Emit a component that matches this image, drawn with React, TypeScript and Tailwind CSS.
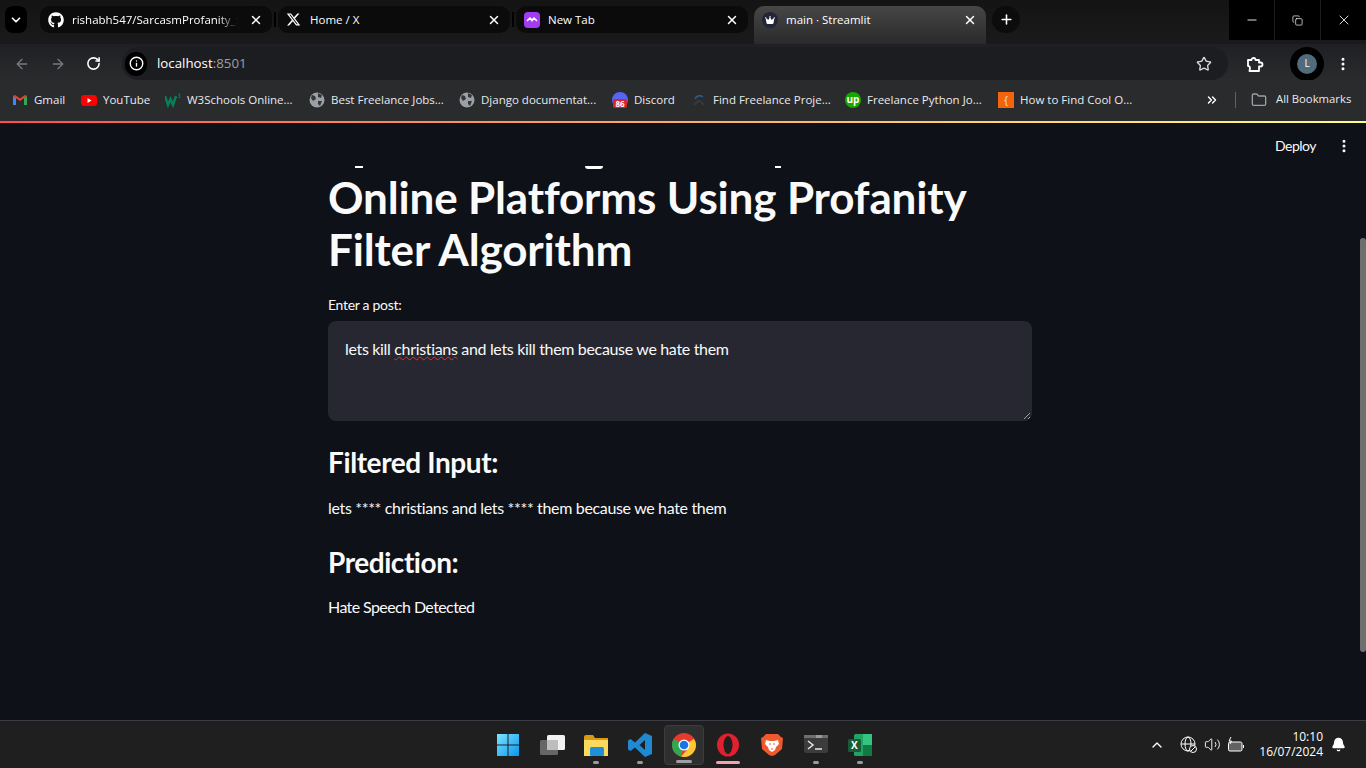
import { ReactNode } from 'react'
import { ChevronDown, X, Plus, Minus, ArrowLeft, ArrowRight, RotateCw, Info, Star, MoreVertical, ChevronUp, ChevronsRight, Folder, Volume2, Bell, Copy } from 'lucide-react'
import { FaGithub, FaXTwitter, FaCrown } from 'react-icons/fa6'

const ui = "font-['Open_Sans','Liberation_Sans',sans-serif]"
const st = "font-['Lato','Liberation_Sans',sans-serif]"

const Globe = () => (
  <svg width="16" height="16" viewBox="0 0 16 16">
    <circle cx="8" cy="8" r="7.5" fill="#9aa0a6" />
    <path d="M3 3l3 1 1 3-3 2-2-3zM9 1l4 2-1 3-3-1zM9 9l4 0-2 5-2-2z" fill="#35363a" />
  </svg>
)

const bookmarks: { icon: ReactNode; label: string; w: string }[] = [
  {
    label: 'Gmail',
    w: 'w-[31px]',
    icon: (
      <svg width="16" height="16" viewBox="0 0 16 16">
        <path d="M1 13V4l3 2v7z" fill="#4285f4" />
        <path d="M12 13V6l3-2v9z" fill="#34a853" />
        <path d="M1 4l7 5 7-5-2-1-5 3.5L3 3z" fill="#ea4335" />
      </svg>
    ),
  },
  {
    label: 'YouTube',
    w: 'w-[46px]',
    icon: (
      <svg width="16" height="16" viewBox="0 0 16 16">
        <rect x="0" y="3" width="16" height="11" rx="3" fill="#f00" />
        <path d="M6.5 6v5l4-2.5z" fill="#fff" />
      </svg>
    ),
  },
  {
    label: 'W3Schools Online...',
    w: 'w-[106px]',
    icon: (
      <svg width="16" height="16" viewBox="0 0 16 16">
        <path d="M0 4l3 9 2.5-6 2.5 6 3-9" fill="none" stroke="#04815a" strokeWidth="2.4" />
        <path d="M13 2h2l-1 1.5h1v2h-2" fill="none" stroke="#04815a" strokeWidth="0.8" />
      </svg>
    ),
  },
  { label: 'Best Freelance Jobs...', w: 'w-[112px]', icon: <Globe /> },
  { label: 'Django documentat...', w: 'w-[115px]', icon: <Globe /> },
  {
    label: 'Discord',
    w: 'w-[41px]',
    icon: (
      <span className="relative block h-4 w-4">
        <span className="absolute left-0 top-0 h-4 w-4 rounded-full bg-[#5865f2]" />
        <span className="absolute left-[1px] top-[7px] h-[9px] w-[14px] rounded-[2px] bg-[#d8232a] text-center text-[8px] font-bold leading-[9px] text-white">
          86
        </span>
      </span>
    ),
  },
  {
    label: 'Find Freelance Proje...',
    w: 'w-[116px]',
    icon: (
      <svg width="16" height="16" viewBox="0 0 16 16">
        <path d="M4 7a5 5 0 0 1 8-2" fill="none" stroke="#2b5d85" strokeWidth="1.6" />
        <path d="M3 13l4-4h2l4 4" fill="none" stroke="#36393d" strokeWidth="2.2" />
      </svg>
    ),
  },
  {
    label: 'Freelance Python Jo...',
    w: 'w-[115px]',
    icon: (
      <span className="block h-4 w-4 rounded-full bg-[#14a800] text-center text-[10px] font-bold leading-[15px] text-white">
        up
      </span>
    ),
  },
  {
    label: 'How to Find Cool O...',
    w: 'w-[113px]',
    icon: (
      <span className="block h-4 w-4 bg-[#f4640c] text-center text-[11px] leading-[15px] text-[#ffe3c8]">
        {'{'}
      </span>
    ),
  },
]

const Tab = ({ icon, label, active, fade, sep }: { icon: ReactNode; label: string; active?: boolean; fade?: boolean; sep?: boolean }) => (
  <div
    className={`relative flex w-[232px] items-center rounded-t-[10px] pl-[8px] pr-[9px] ${
      active
        ? 'h-[38px] bg-gradient-to-b from-[#474747] to-[#2a2a2a] pb-[11px]'
        : 'h-[27px] rounded-b-[10px] bg-[#0b0b0b]'
    }`}
  >
    <span className="flex w-[24px] shrink-0 items-center">{icon}</span>
    <span
      className={`w-[166px] overflow-hidden whitespace-nowrap text-[11.5px] text-white ${
        fade ? '[mask-image:linear-gradient(to_right,#000_88%,transparent)]' : ''
      }`}
    >
      {label}
    </span>
    <X size={14} strokeWidth={2.5} className="ml-auto text-white" />
    {sep && <span className="absolute -right-[4px] top-[6px] h-[15px] w-[2px] bg-black" />}
  </div>
)

const TaskIcon = ({ children, pip, active }: { children: ReactNode; pip?: string; active?: boolean }) => (
  <div className={`relative flex h-[40px] w-[40px] items-center justify-center rounded-[4px] ${active ? 'border border-[#3d3d3d] bg-[#2f2f2f]' : ''}`}>
    {children}
    {pip && <span className={`absolute bottom-[1px] left-1/2 h-[3px] -translate-x-1/2 rounded-full ${pip}`} />}
  </div>
)

export default function App() {
  return (
    <div className={`flex h-[768px] w-[1366px] flex-col overflow-hidden bg-[#0e1117] ${ui}`}>
      {/* tab strip */}
      <div className="flex h-[44px] items-start bg-gradient-to-b from-[#141414] to-[#1a1a1a] pl-[5px]">
        <div className="mt-[6px] flex h-[27px] w-[22px] items-center justify-center rounded-[8px] bg-black">
          <ChevronDown size={14} strokeWidth={3} className="text-white" />
        </div>
        <div className="ml-[13px] mt-[6px] flex w-[946px] items-start gap-[6px]">
          <Tab icon={<FaGithub size={16} className="text-white" />} label="rishabh547/SarcasmProfanity_Sf" fade sep />
          <Tab icon={<FaXTwitter size={15} className="text-white" />} label="Home / X" sep />
          <Tab
            icon={
              <svg width="16" height="16" viewBox="0 0 16 16">
                <rect width="16" height="16" rx="4" fill="#a23cf0" />
                <path d="M3 9l3-3 3 3M7 9l3-3 3 3" fill="none" stroke="#fff" strokeWidth="1.5" />
              </svg>
            }
            label="New Tab"
          />
          <Tab
            active
            icon={
              <span className="flex h-4 w-4 items-center justify-center rounded-full bg-[#23253a]">
                <FaCrown size={10} className="text-white" />
              </span>
            }
            label="main · Streamlit"
          />
        </div>
        <div className="ml-[6px] mt-[6px] flex h-[27px] w-[28px] items-center justify-center rounded-full bg-[#0c0c0c]">
          <Plus size={15} strokeWidth={2.5} className="text-white" />
        </div>
        <div className="ml-auto flex h-[40px] w-[137px] bg-black">
          <div className="flex w-[46px] items-center justify-center border-r border-[#1c1c1c]">
            <Minus size={14} strokeWidth={1.5} className="text-white" />
          </div>
          <div className="flex w-[46px] items-center justify-center border-r border-[#1c1c1c]">
            <Copy size={11} strokeWidth={1.5} className="text-white" />
          </div>
          <div className="flex w-[45px] items-center justify-center">
            <X size={16} strokeWidth={1.3} className="text-white" />
          </div>
        </div>
      </div>

      {/* toolbar */}
      <div className="flex h-[36px] items-center bg-gradient-to-b from-[#1f2023] to-[#2a2b2d] pt-[3px]">
        <ArrowLeft size={16} className="ml-[14px] text-[#77797c]" />
        <ArrowRight size={16} className="ml-[20px] text-[#77797c]" />
        <RotateCw size={15} strokeWidth={2.5} className="ml-[20px] text-white" />
        <div className="ml-[21px] flex h-[33px] w-[1106px] items-center rounded-full bg-[#1c1d20]">
          <span className="ml-[3px] flex h-[24px] w-[22px] items-center justify-center rounded-full bg-black">
            <Info size={15} strokeWidth={2.2} className="text-white" />
          </span>
          <span className="ml-[10px] text-[13.3px] text-white">
            localhost<span className="text-[#9aa0a6]">:8501</span>
          </span>
          <Star size={16} strokeWidth={2} className="ml-auto mr-[16px] text-[#dadce0]" />
        </div>
        <svg width="18" height="18" viewBox="0 0 18 18" fill="none" stroke="#fff" strokeWidth="1.8" className="ml-[18px]">
          <path d="M2 5h3.5a2 2 0 0 1 4 0H13v2.5h1.5a2 2 0 0 1 0 4H13V16H3.5l.5-3a1.8 1.8 0 0 0-2-2z" strokeLinejoin="round" />
        </svg>
        <span className="ml-[26px] flex h-[34px] w-[34px] items-center justify-center rounded-full bg-black">
          <span className="flex h-5 w-5 items-center justify-center rounded-full bg-[#4f6b7c] text-[10px] text-white">L</span>
        </span>
        <MoreVertical size={16} strokeWidth={2.5} className="ml-[11px] text-white" />
      </div>

      {/* bookmarks */}
      <div className="flex h-[41px] items-center gap-[16px] bg-[#2a2b2d] pb-[2px] pl-[12px]">
        {bookmarks.map((b) => (
          <div key={b.label} className="flex items-center gap-[6px]">
            <span className="shrink-0">{b.icon}</span>
            <span className={`whitespace-nowrap text-[11.5px] text-[#e8eaed] ${b.w}`}>{b.label}</span>
          </div>
        ))}
        <ChevronsRight size={14} strokeWidth={2.5} className="ml-[56px] text-white" />
        <span className="h-[16px] w-px bg-[#5f6368]" />
        <div className="-ml-[1px] flex items-center gap-[9px]">
          <Folder size={16} className="text-[#9aa0a6]" />
          <span className="whitespace-nowrap text-[11.3px] text-[#e8eaed]">All Bookmarks</span>
        </div>
      </div>

      {/* streamlit top decoration */}
      <div className="h-[2px] bg-gradient-to-r from-[#ff4b4b] to-[#fffd80]" />

      {/* page */}
      <div className={`relative flex min-h-0 flex-1 ${st}`}>
        <div className="flex-1 pt-[43px]">
          <div className="ml-[328px] w-[704px] text-[#fafafa]">
            <div className="flex h-[5px]">
              <span className="ml-[27px] h-[2px] w-[8px] bg-white" />
              <span className="ml-[222px] h-[3px] w-[18px] rounded-b-full bg-white" />
              <span className="ml-[172px] h-[2px] w-[6px] bg-white" />
            </div>
            <h1 className="whitespace-nowrap text-[44px] font-bold leading-[52px] tracking-[-0.15px]">
              Online Platforms Using Profanity<br />Filter Algorithm
            </h1>
            <div className="mt-[20px] text-[14px] leading-[20px] tracking-[-0.3px]">Enter a post:</div>
            <div className="relative mt-[6px] h-[100px] rounded-[8px] bg-[#262730] px-[17px] py-[16px] text-[16px] leading-[24px] tracking-[-0.33px]">
              lets kill <span className="underline decoration-[#e03131] decoration-wavy decoration-1">christians</span> and lets kill them because we hate them
              <svg width="8" height="8" viewBox="0 0 8 8" className="absolute bottom-[1px] right-[1px]">
                <path d="M1 7l6-6M5 7l2-2" stroke="#9aa0a6" strokeWidth="1" />
              </svg>
            </div>
            <h2 className="mt-[21px] text-[28px] font-bold leading-[40px] tracking-[-0.4px]">Filtered Input:</h2>
            <p className="mt-[14px] text-[16px] leading-[24px] tracking-[-0.34px]">lets **** christians and lets **** them because we hate them</p>
            <h2 className="mt-[22px] text-[28px] font-bold leading-[40px] tracking-[-0.45px]">Prediction:</h2>
            <p className="mt-[13px] text-[16px] leading-[24px] tracking-[-0.6px]">Hate Speech Detected</p>
          </div>
        </div>
        <div className="absolute right-[14px] top-[12px] flex items-center gap-[20px]">
          <span className="text-[14px] tracking-[-0.5px] text-[#fafafa]">Deploy</span>
          <MoreVertical size={16} strokeWidth={2.5} className="text-[#fafafa]" />
        </div>
        <div className="w-[6px] pt-[115px]">
          <div className="h-[414px] rounded-full bg-[#6e6e6e]" />
        </div>
      </div>

      {/* taskbar */}
      <div className="flex h-[48px] items-center border-t border-[#3a3d44] bg-[#1f1f1f]">
        <div className="ml-[488px] flex items-center gap-[4px]">
          <TaskIcon>
            <svg width="24" height="24" viewBox="0 0 24 24">
              <defs>
                <linearGradient id="win" x1="0" y1="0" x2="1" y2="1">
                  <stop offset="0" stopColor="#7ae4ff" />
                  <stop offset="1" stopColor="#0a94ee" />
                </linearGradient>
              </defs>
              <path d="M1 1h10.5v10.5H1zM12.5 1H23v10.5H12.5zM1 12.5h10.5V23H1zM12.5 12.5H23V23H12.5z" fill="url(#win)" />
            </svg>
          </TaskIcon>
          <TaskIcon>
            <svg width="26" height="24" viewBox="0 0 26 24">
              <rect x="8" y="2" width="18" height="15" rx="1.5" fill="#f2f2f2" />
              <rect x="1" y="7" width="18" height="15" rx="1.5" fill="#666" />
              <rect x="8" y="7" width="11" height="10" fill="#bdbdbd" />
            </svg>
          </TaskIcon>
          <TaskIcon pip="w-[6px] bg-[#9a9a9a]">
            <svg width="24" height="24" viewBox="0 0 24 24">
              <path d="M0 4a2 2 0 0 1 2-2h7l2 3h13v18H0z" fill="#d79a12" />
              <path d="M0 7h24v16H0z" fill="#fbd85e" />
              <rect x="6" y="14" width="14" height="9" rx="1.5" fill="#1f8fd8" />
            </svg>
          </TaskIcon>
          <TaskIcon pip="w-[6px] bg-[#9a9a9a]">
            <svg width="24" height="24" viewBox="0 0 24 24">
              <path d="M17 0l7 3v18l-7 3-10-9.5-4.5 3.5L0 16.5V7.500L2.500 6 7 9.500zM17 7l-5.500 5 5.500 5z" fill="#1f8ad2" />
            </svg>
          </TaskIcon>
          <TaskIcon active pip="w-[16px] bg-[#a0a0a0]">
            <svg width="24" height="24" viewBox="0 0 24 24">
              <circle cx="12" cy="12" r="12" fill="#e33b2e" />
              <path d="M12 12L1.6 6A12 12 0 0 0 9 23.6z" fill="#2da94f" />
              <path d="M12 12l3 5-6 6.6A12 12 0 0 0 24 12 12 12 0 0 0 22 6z" fill="#fcc934" />
              <circle cx="12" cy="12" r="5.5" fill="#fff" />
              <circle cx="12" cy="12" r="4.3" fill="#1a73e8" />
            </svg>
          </TaskIcon>
          <TaskIcon pip="w-[24px] bg-[#f6a0ae]">
            <svg width="24" height="24" viewBox="0 0 24 24">
              <ellipse cx="12" cy="12" rx="11" ry="11.5" fill="#e0202f" />
              <ellipse cx="12" cy="12" rx="4.5" ry="9" fill="#1f1f1f" />
            </svg>
          </TaskIcon>
          <TaskIcon>
            <svg width="22" height="24" viewBox="0 0 22 24">
              <path d="M5 1h12l3 3 2 1-1 11-7 6-3 1-3-1-7-6L0 5l2-1z" fill="#f1582c" />
              <path d="M5 7l4 1h4l4-1 1 4-3 3-1 3-3 2-3-2-1-3-3-3z" fill="#fff" />
              <path d="M8 11h2M12 11h2M10 16h2" stroke="#f1582c" strokeWidth="1.2" />
            </svg>
          </TaskIcon>
          <TaskIcon pip="w-[6px] bg-[#9a9a9a]">
            <svg width="24" height="20" viewBox="0 0 24 20">
              <rect width="24" height="18" rx="2" fill="#3c3c3c" />
              <rect width="12" height="3" fill="#6f6f6f" />
              <rect x="12" width="6" height="3" fill="#9a9a9a" />
              <rect x="18" width="6" height="3" fill="#6f6f6f" />
              <path d="M4 6l5 4-5 4" fill="none" stroke="#e6e6e6" strokeWidth="1.5" />
              <path d="M11 14h7" stroke="#e6e6e6" strokeWidth="1.5" />
            </svg>
          </TaskIcon>
          <TaskIcon pip="w-[6px] bg-[#9a9a9a]">
            <svg width="24" height="24" viewBox="0 0 24 24">
              <rect x="6" y="1" width="18" height="22" rx="1.5" fill="#21a366" />
              <rect x="15" y="1" width="9" height="11" fill="#33c481" />
              <rect x="15" y="12" width="9" height="11" fill="#107c41" />
              <rect x="0" y="6" width="13" height="13" rx="1.5" fill="#185c37" />
              <text x="3" y="16" fontSize="10" fontWeight="700" fill="#fff">X</text>
            </svg>
          </TaskIcon>
        </div>
        <ChevronUp size={16} strokeWidth={2} className="ml-[269px] text-white" />
        <svg width="18" height="18" viewBox="0 0 18 18" fill="none" stroke="#fff" strokeWidth="1" className="ml-[15px]">
          <circle cx="8" cy="8" r="7" />
          <ellipse cx="8" cy="8" rx="3" ry="7" />
          <path d="M1 8h14" />
          <circle cx="13" cy="13" r="3.5" fill="#1f1f1f" />
          <path d="M11 15l4-4" />
        </svg>
        <Volume2 size={17} strokeWidth={1.3} className="ml-[6px] text-white" />
        <svg width="18" height="16" viewBox="0 0 18 16" fill="none" stroke="#fff" strokeWidth="1" className="ml-[6px]">
          <rect x="1.5" y="5" width="13.5" height="9" rx="1.5" fill="#fff" fillOpacity="0.3" />
          <path d="M16.5 8v3" />
          <path d="M4 0L2 4h2.500L3 7" />
        </svg>
        <div className="mb-[2px] ml-[13px] w-[65px] text-right text-[12px] leading-[15px] text-white">
          <div>10:10</div>
          <div>16/07/2024</div>
        </div>
        <Bell size={15} fill="#fff" className="ml-[8px] text-white" />
      </div>
    </div>
  )
}
